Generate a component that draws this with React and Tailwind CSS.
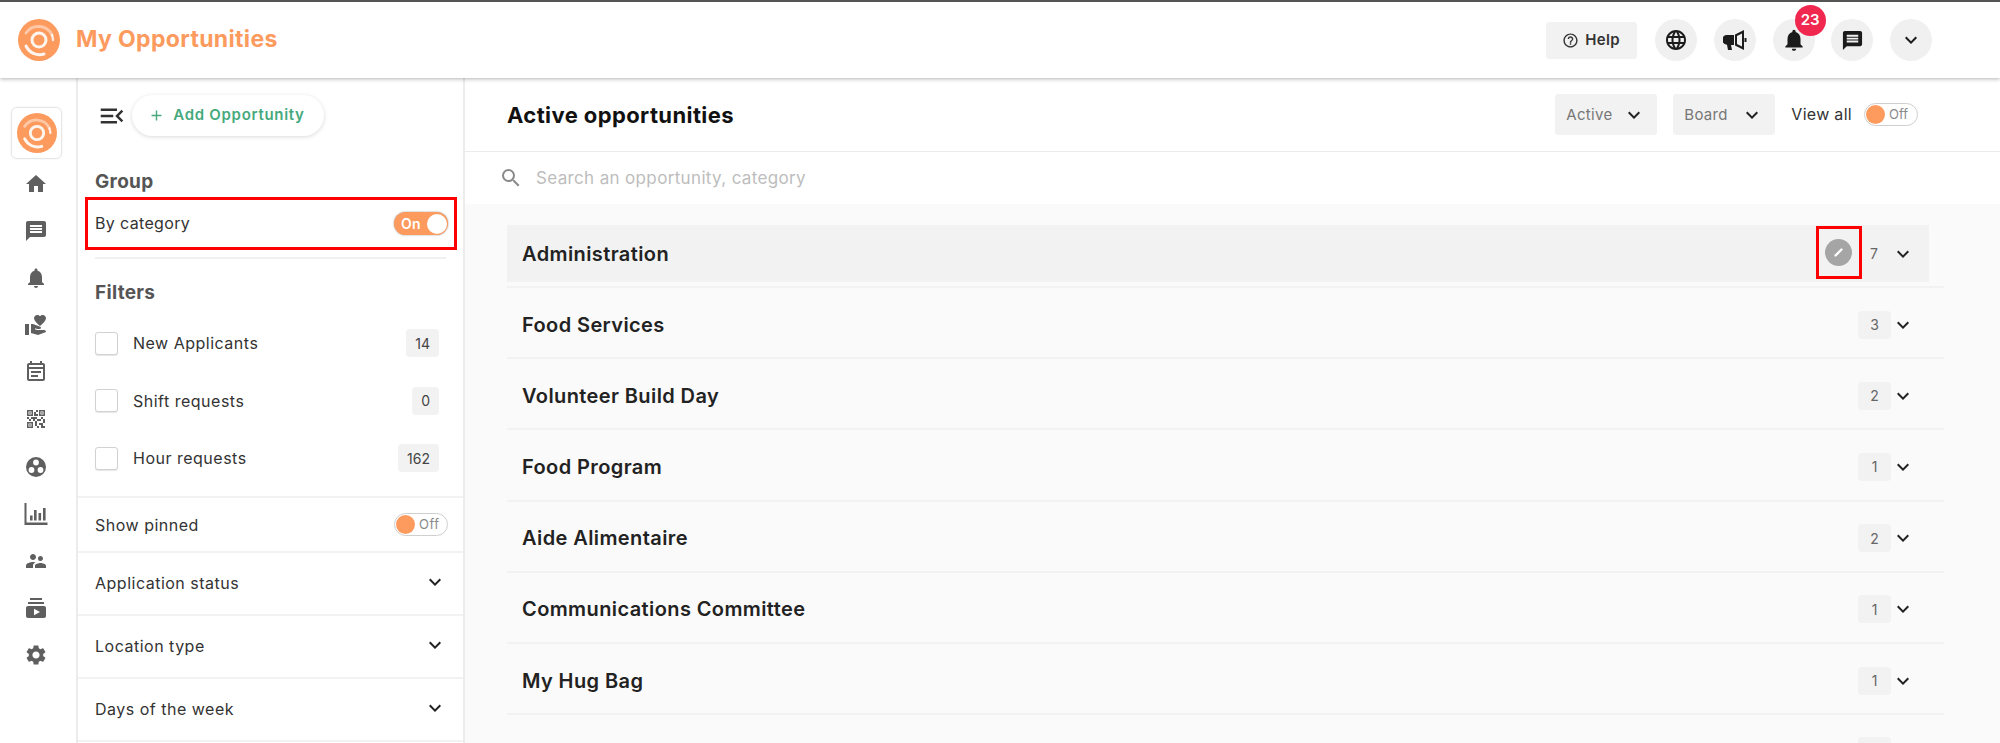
import React from "react";
import {
  MdHome,
  MdMessage,
  MdNotifications,
  MdVolunteerActivism,
  MdOutlineEventNote,
  MdQrCode2,
  MdSupervisorAccount,
  MdSubscriptions,
  MdSettings,
  MdOutlineHelpOutline,
  MdLanguage,
  MdKeyboardArrowDown,
  MdSearch,
  MdMenuOpen,
  MdAdd,
} from "react-icons/md";

const Logo = ({ size }) => (
  <svg width={size} height={size} viewBox="0 0 42 42">
    <circle cx="21" cy="21" r="21" fill="#fd9a5e" />
    <circle cx="21" cy="21" r="7" fill="none" stroke="#fff" strokeOpacity="0.9" strokeWidth="3" />
    <path d="M8 14a15 15 0 0 1 26 2" fill="none" stroke="#fff" strokeOpacity="0.45" strokeWidth="3" strokeLinecap="round" />
    <path d="M34 16a15 15 0 0 1 1 5" fill="none" stroke="#fff" strokeOpacity="0.8" strokeWidth="2.4" strokeLinecap="round" />
    <path d="M8 27a15 15 0 0 0 18 8" fill="none" stroke="#fff" strokeOpacity="0.9" strokeWidth="3" strokeLinecap="round" />
  </svg>
);

const BarsIcon = () => (
  <svg width="24" height="24" viewBox="0 0 24 24" fill="#5f5f5f">
    <path d="M0.5 1h2v19.5h21V23H0.500z" />
    <rect x="6" y="13.500" width="2.600" height="5" />
    <rect x="10" y="8" width="2.600" height="10.500" />
    <rect x="14.500" y="11" width="2.600" height="7.500" />
    <rect x="19" y="6" width="2.600" height="12.500" />
  </svg>
);

const CirclesIcon = () => (
  <svg width="24" height="24" viewBox="0 0 24 24">
    <circle cx="12" cy="12" r="10" fill="#5f5f5f" />
    <circle cx="12" cy="7.500" r="2.900" fill="#fff" />
    <circle cx="7.500" cy="15" r="2.900" fill="#fff" />
    <circle cx="16.500" cy="15" r="2.900" fill="#fff" />
  </svg>
);

// megaphone: solid body on the left, hollow horn opening to the right
const HornIcon = () => (
  <svg width="24" height="22" viewBox="0 0 24 22" fill="#1b1b1b">
    <path d="M3 6h8v10H8l1 5H5l-1-5.200A5 5 0 0 1 3 6z" />
    <path d="M12 5.500 21 1v20l-9-4.500zM14 7v8l5 2.600V4.400z" fillRule="evenodd" />
    <rect x="21.500" y="9" width="2" height="4" />
  </svg>
);

const Toggle = ({ on }) =>
  on ? (
    <div className="flex h-[23px] w-[54px] items-center justify-between rounded-full bg-[#fd9a5e] pl-[7px] pr-[1px] shadow-[0_0_2px_#999]">
      <span className="text-[14px] font-semibold text-white">On</span>
      <span className="h-[20px] w-[20px] rounded-full bg-white" />
    </div>
  ) : (
    <div className="flex h-[23px] w-[54px] items-center gap-[4px] rounded-full border border-[#cfcfcf] bg-white pl-[1px]">
      <span className="h-[19px] w-[19px] rounded-full bg-[#fd9a5e]" />
      <span className="text-[13px] text-[#8a8a8a]">Off</span>
    </div>
  );

const railIcons = [
  MdHome,
  MdMessage,
  MdNotifications,
  MdVolunteerActivism,
  MdOutlineEventNote,
  MdQrCode2,
  CirclesIcon,
  BarsIcon,
  MdSupervisorAccount,
  MdSubscriptions,
  MdSettings,
];

const filters = [
  { label: "New Applicants", count: 14 },
  { label: "Shift requests", count: 0 },
  { label: "Hour requests", count: 162 },
];

const accordions = ["Application status", "Location type", "Days of the week"];

const categories = [
  { name: "Food Services", count: 3 },
  { name: "Volunteer Build Day", count: 2 },
  { name: "Food Program", count: 1 },
  { name: "Aide Alimentaire", count: 2 },
  { name: "Communications Committee", count: 1 },
  { name: "My Hug Bag", count: 1 },
];

const Header = () => (
  <header className="relative z-10 flex h-[78px] shrink-0 items-center border-t-2 border-[#555] bg-white pl-[18px] pr-[68px] shadow-[0_1px_4px_rgba(0,0,0,0.3)]">
    <Logo size={42} />
    <h1 className="-mt-[2px] ml-[16px] text-[23px] font-bold tracking-[0.35px] text-[#fd9a5e]">My Opportunities</h1>
    <div className="ml-auto flex items-center gap-[16.7px]">
      <button className="mr-[2px] flex h-[37px] w-[91px] items-center justify-center gap-[6px] rounded-[3px] bg-[#f2f2f2] text-[15px] font-semibold tracking-[0.3px] text-[#333]">
        <MdOutlineHelpOutline size={17} />
        Help
      </button>
      <div className="flex h-[42px] w-[42px] items-center justify-center rounded-full bg-[#f0f0f0] text-[#1b1b1b]">
        <MdLanguage size={24} />
      </div>
      <div className="flex h-[42px] w-[42px] items-center justify-center rounded-full bg-[#f0f0f0]">
        <HornIcon />
      </div>
      <div className="relative flex h-[42px] w-[42px] items-center justify-center rounded-full bg-[#f0f0f0] text-[#1b1b1b]">
        <MdNotifications size={26} />
        <span className="absolute -right-[11px] -top-[14px] flex h-[31px] w-[31px] items-center justify-center rounded-full bg-[#f0274f] text-[15px] font-semibold text-white">
          23
        </span>
      </div>
      <div className="flex h-[42px] w-[42px] items-center justify-center rounded-full bg-[#f0f0f0] text-[#1b1b1b]">
        <MdMessage size={23} />
      </div>
      <div className="flex h-[42px] w-[42px] items-center justify-center rounded-full bg-[#f0f0f0] text-[#1b1b1b]">
        <MdKeyboardArrowDown size={24} />
      </div>
    </div>
  </header>
);

const Rail = () => (
  <nav className="flex w-[78px] shrink-0 flex-col items-center border-r-2 border-[#ececec] bg-white pr-[4px] pt-[29px]">
    <div className="mb-[13px] ml-[1px] flex h-[52px] w-[51px] items-center justify-center rounded-[6px] border border-[#e6e6e6] shadow-[0_0_2px_rgba(0,0,0,0.08)]">
      <Logo size={40} />
    </div>
    <div className="flex flex-col items-center gap-[23.1px] text-[#5f5f5f]">
      {railIcons.map((Icon, i) => (
        <Icon key={i} size={24} />
      ))}
    </div>
  </nav>
);

const Sidebar = () => (
  <aside className="flex w-[387px] shrink-0 flex-col border-r-2 border-[#ececec] bg-white">
    <div className="flex items-center pl-[19px] pt-[17px]">
      <MdMenuOpen size={30} className="text-[#333]" />
      <button className="ml-[5px] flex h-[41px] w-[192px] items-center justify-center gap-[8px] rounded-full bg-white pr-[3px] text-[15px] font-semibold tracking-[0.7px] text-[#45a97d] shadow-[0_1px_4px_rgba(0,0,0,0.15)]">
        <MdAdd size={17} />
        Add Opportunity
      </button>
    </div>
    <h2 className="ml-[17px] mt-[32px] text-[19px] font-bold leading-[28px] tracking-[0.3px] text-[#555]">Group</h2>
    <div className="relative ml-[17px] mr-[15px] mt-[1px] flex h-[53px] items-center justify-between text-[16px] tracking-[0.35px] text-[#333]">
      <span className="-mt-[2px]">By category</span>
      <Toggle on />
      <div className="absolute -left-[10px] -right-[9px] bottom-0 top-0 border-[3px] border-[#ff0000]" />
    </div>
    <div className="mx-[17px] mt-[7px] border-t-2 border-[#f0f0f0]" />
    <h2 className="ml-[17px] mt-[20px] text-[19px] font-bold leading-[28px] tracking-[0.3px] text-[#555]">Filters</h2>
    <div className="mt-[22px] flex flex-col gap-[29.5px] pl-[17px] pr-[24px]">
      {filters.map((f) => (
        <div key={f.label} className="flex h-[28px] items-center text-[16px] tracking-[0.5px] text-[#333]">
          <span className="h-[23px] w-[23px] rounded-[3px] border border-[#d2d2d2] bg-white shadow-[0_1px_1px_rgba(0,0,0,0.1)]" />
          <span className="ml-[15px]">{f.label}</span>
          <span className="ml-auto flex h-[28px] items-center rounded-[4px] bg-[#f2f2f2] px-[9px] text-[14px] tracking-normal text-[#444]">
            {f.count}
          </span>
        </div>
      ))}
    </div>
    <div className="mt-[24px] flex h-[55px] items-center justify-between border-t-2 border-[#f2f2f2] pl-[17px] pr-[15px] text-[16px] tracking-[0.5px] text-[#333]">
      Show pinned
      <Toggle />
    </div>
    {accordions.map((a) => (
      <div key={a} className="flex h-[63px] shrink-0 items-center justify-between border-t-2 border-[#f2f2f2] pb-[2px] pl-[17px] pr-[16px] text-[16px] tracking-[0.5px] text-[#333]">
        {a}
        <MdKeyboardArrowDown size={24} className="-mt-[2px] text-[#222]" />
      </div>
    ))}
    <div className="border-t-2 border-[#f2f2f2]" />
  </aside>
);

const Dropdown = ({ label }) => (
  <div className="flex h-[41px] w-[102px] items-center justify-between rounded-[3px] bg-[#f2f2f2] pl-[11px] pr-[11px] text-[15px] tracking-[0.3px] text-[#777]">
    <span className="mt-[1px]">{label}</span>
    <MdKeyboardArrowDown size={24} className="text-[#222]" />
  </div>
);

const Main = () => (
  <main className="flex min-w-0 flex-1 flex-col bg-[#fafafa]">
    <div className="flex h-[74px] shrink-0 items-center border-b border-[#ececec] bg-white pl-[42px] pr-[82px]">
      <h2 className="mt-[2px] text-[22px] font-bold tracking-[0.4px] text-[#111]">Active opportunities</h2>
      <div className="ml-auto flex items-center gap-[16px]">
        <Dropdown label="Active" />
        <Dropdown label="Board" />
        <span className="-mt-[2px] text-[16px] tracking-[0.3px] text-[#333]">View all</span>
        <div className="-ml-[4px]">
          <Toggle />
        </div>
      </div>
    </div>
    <div className="flex h-[52px] shrink-0 items-center bg-white pl-[34px] text-[17px] tracking-[0.35px] text-[#bdbdbd]">
      <MdSearch size={24} className="text-[#8a8a8a]" />
      <span className="ml-[13px] mt-[2px]">Search an opportunity, category</span>
    </div>
    <div className="flex flex-col pl-[42px] pr-[56px] pt-[21px]">
      <div className="border-b-2 border-[#f2f2f2] pb-[4px]">
        <div className="relative mr-[15px] flex h-[57px] items-center bg-[#f2f2f2] pl-[15px] pr-[14px]">
          <span className="text-[20px] font-semibold tracking-[0.4px] text-[#222]">Administration</span>
          <div className="relative z-10 -mr-[2px] -mt-[2px] ml-auto flex h-[53px] w-[46px] shrink-0 items-center justify-center border-[3px] border-[#ff0000] pr-[2px]">
            <span className="flex h-[27px] w-[27px] items-center justify-center rounded-full bg-[#a5a5a5]">
              <svg width="13" height="13" viewBox="0 0 13 13">
                <path d="M3.500 9.500 9.500 3.500" stroke="#fff" strokeWidth="2.4" strokeLinecap="round" />
              </svg>
            </span>
          </div>
          <span className="flex h-[28px] w-[28px] items-center justify-center text-[14px] text-[#666]">7</span>
          <MdKeyboardArrowDown size={24} className="ml-[3px] text-[#222]" />
        </div>
      </div>
      {categories.map((c) => (
        <div key={c.name} className="flex h-[71.2px] shrink-0 items-center border-b-2 border-[#f2f2f2] pl-[15px] pr-[29px] pt-[4px]">
          <span className="text-[20px] font-semibold tracking-[0.4px] text-[#222]">{c.name}</span>
          <span className="ml-auto flex h-[28px] w-[33px] items-center justify-center rounded-[4px] bg-[#f2f2f2] text-[14px] text-[#666]">
            {c.count}
          </span>
          <MdKeyboardArrowDown size={24} className="text-[#222]" />
        </div>
      ))}
      {/* next row is cut off by the window, only the badge top shows */}
      <div className="flex justify-end pr-[53px] pt-[22px]">
        <span className="h-[28px] w-[33px] rounded-[4px] bg-[#f2f2f2]" />
      </div>
    </div>
  </main>
);

export default function App() {
  return (
    <div className="flex h-[743px] flex-col overflow-hidden bg-white font-['Inter','Noto_Sans',sans-serif]">
      <Header />
      <div className="flex min-h-0 flex-1">
        <Rail />
        <Sidebar />
        <Main />
      </div>
    </div>
  );
}
